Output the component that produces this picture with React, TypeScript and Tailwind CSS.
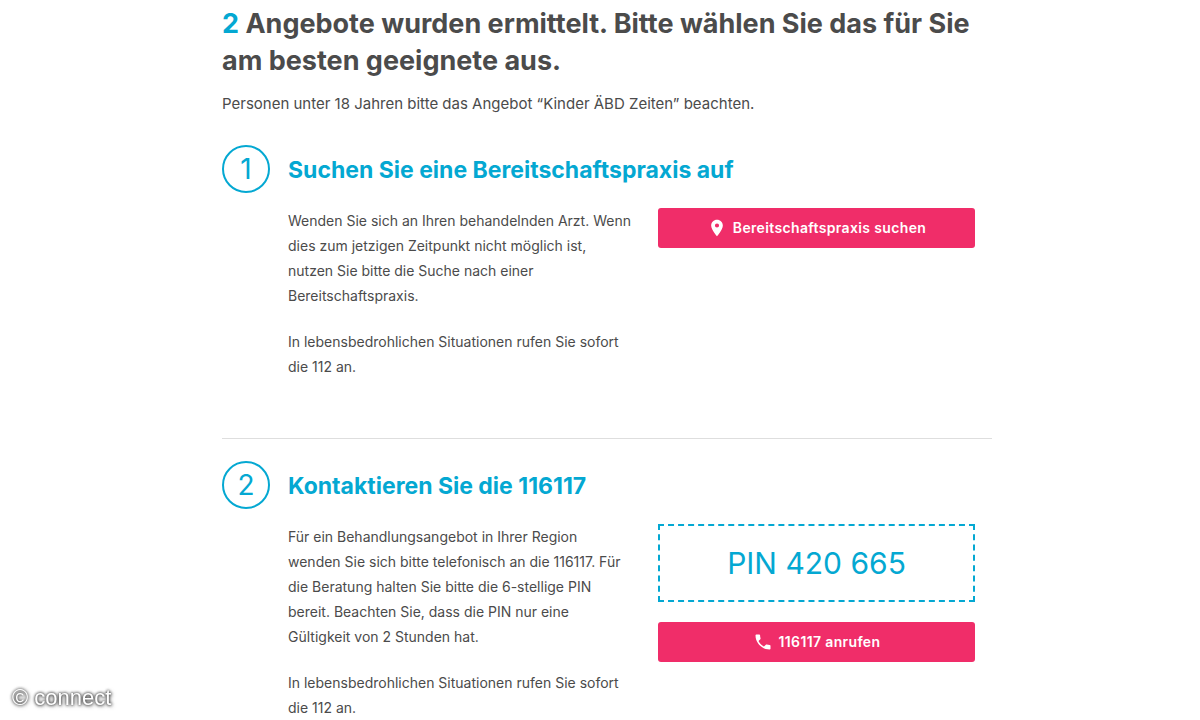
import React from 'react';

const PinIcon = () => (
  <svg viewBox="0 0 24 24" className="h-5 w-5 shrink-0" fill="currentColor" aria-hidden="true">
    <path d="M12 2C8.13 2 5 5.13 5 9c0 5.25 7 13 7 13s7-7.75 7-13c0-3.87-3.13-7-7-7zm0 9.5a2.5 2.5 0 0 1 0-5 2.5 2.5 0 0 1 0 5z" />
  </svg>
);

const PhoneIcon = () => (
  <svg viewBox="0 0 24 24" className="h-5 w-5 shrink-0" fill="currentColor" aria-hidden="true">
    <path d="M6.62 10.79c1.44 2.83 3.76 5.14 6.59 6.59l2.2-2.2c.27-.27.67-.36 1.02-.24 1.12.37 2.33.57 3.57.57.55 0 1 .45 1 1V20c0 .55-.45 1-1 1-9.39 0-17-7.61-17-17 0-.55.45-1 1-1h3.5c.55 0 1 .45 1 1 0 1.25.2 2.45.57 3.57.11.35.03.74-.25 1.02l-2.2 2.2z" />
  </svg>
);

function ActionButton({ icon, children }: { icon: React.ReactNode; children: React.ReactNode }) {
  return (
    <button
      type="button"
      className="flex h-10 w-full cursor-pointer items-center justify-center gap-1.5 rounded-[3px] bg-[#f02d69] text-sm font-semibold tracking-wide text-white hover:bg-[#d9245b]"
    >
      {icon}
      <span>{children}</span>
    </button>
  );
}

interface OfferProps {
  number: number;
  title: string;
  action: React.ReactNode;
  children: React.ReactNode;
}

function Offer({ number, title, action, children }: OfferProps) {
  return (
    <section className="flex gap-[18px]">
      <div className="flex h-12 w-12 shrink-0 items-center justify-center rounded-full border-2 border-[#04a8d2] text-[28px] text-[#04a8d2]">
        {number}
      </div>
      <div className="min-w-0 flex-1">
        <h2 className="pt-[9px] text-[23px] leading-8 font-bold text-[#04a8d2]">{title}</h2>
        <div className="mt-[22px] flex flex-col gap-[26px] pr-[17px] md:flex-row">
          <div className="flex-1 space-y-[21px] text-sm leading-[25px]">{children}</div>
          <div className="w-full shrink-0 space-y-5 md:w-[317px]">{action}</div>
        </div>
      </div>
    </section>
  );
}

export default function App() {
  return (
    <div className="min-h-screen bg-white pr-4 pl-[30px] font-['Inter','Liberation_Sans',sans-serif] text-[#4b4b4b]">
      <main className="mx-auto max-w-[770px] pt-[5px]">
        <h1 className="text-[27px] leading-[37px] font-bold">
          <span className="text-[#04a8d2]">2</span> Angebote wurden ermittelt. Bitte wählen Sie das für Sie am besten geeignete aus.
        </h1>
        <p className="mt-[13px] text-[15px] leading-6">
          Personen unter 18 Jahren bitte das Angebot “Kinder ÄBD Zeiten” beachten.
        </p>

        <div className="mt-[29px] border-b border-[#dedede] pb-[59px]">
          <Offer
            number={1}
            title="Suchen Sie eine Bereitschaftspraxis auf"
            action={<ActionButton icon={<PinIcon />}>Bereitschaftspraxis suchen</ActionButton>}
          >
            <p>
              Wenden Sie sich an Ihren behandelnden Arzt. Wenn dies zum jetzigen Zeitpunkt nicht möglich ist, nutzen Sie
              bitte die Suche nach einer Bereitschaftspraxis.
            </p>
            <p>In lebensbedrohlichen Situationen rufen Sie sofort die 112 an.</p>
          </Offer>
        </div>

        <div className="pt-[22px]">
          <Offer
            number={2}
            title="Kontaktieren Sie die 116117"
            action={
              <>
                <div className="flex h-[78px] items-center justify-center border-2 border-dashed border-[#04a8d2] text-[30px] text-[#04a8d2]">
                  PIN 420 665
                </div>
                <ActionButton icon={<PhoneIcon />}>116117 anrufen</ActionButton>
              </>
            }
          >
            <p>
              Für ein Behandlungsangebot in Ihrer Region wenden Sie sich bitte telefonisch an die 116117. Für die
              Beratung halten Sie bitte die 6-stellige PIN bereit. Beachten Sie, dass die PIN nur eine Gültigkeit von 2
              Stunden hat.
            </p>
            <p>In lebensbedrohlichen Situationen rufen Sie sofort die 112 an.</p>
          </Offer>
        </div>
      </main>

      <div className="fixed bottom-1.5 left-3 font-['Liberation_Sans',sans-serif] text-[22px] text-white [text-shadow:0_0_3px_#444,0_0_3px_#666,1px_1px_4px_#777]">
        © connect
      </div>
    </div>
  );
}
